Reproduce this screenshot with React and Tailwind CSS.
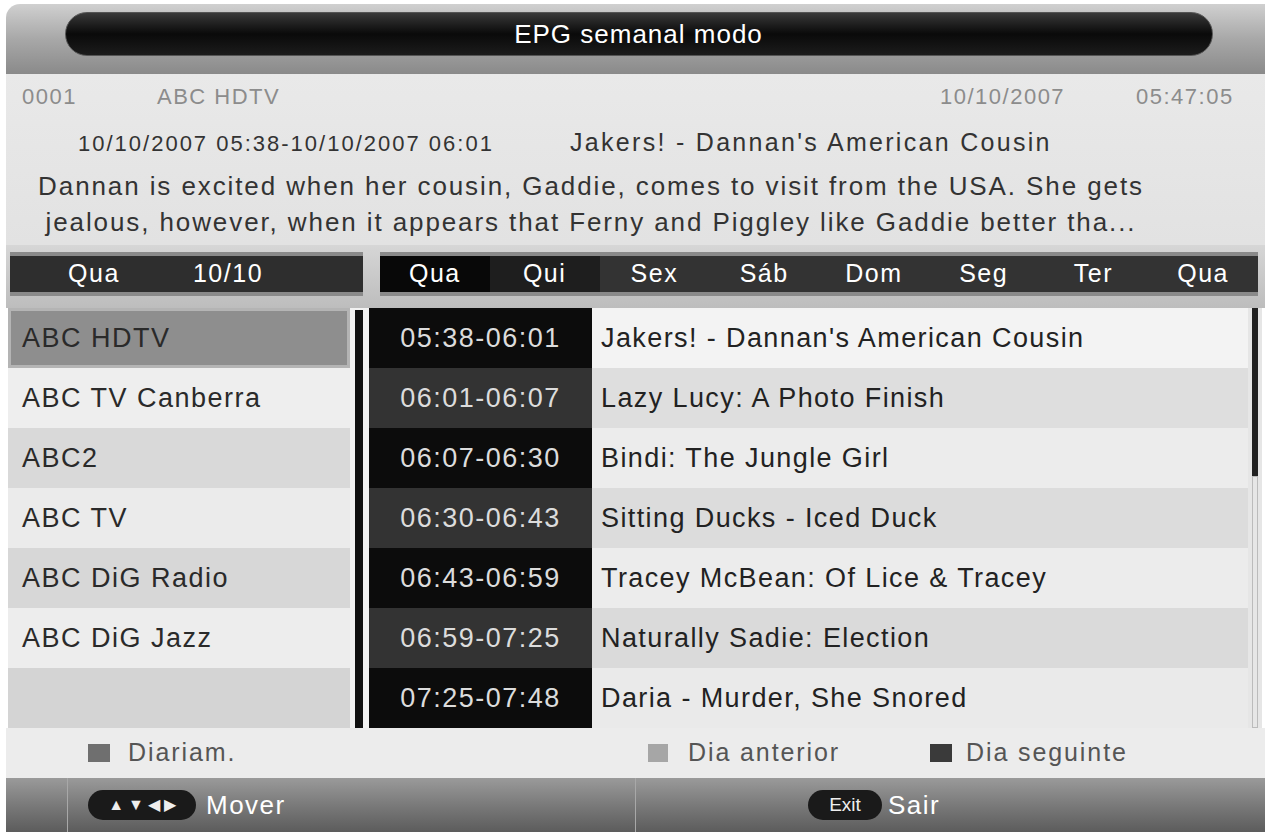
const channels = [
  { name: 'ABC HDTV', bg: 'bg-[#8e8e8e]', selected: true },
  { name: 'ABC TV Canberra', bg: 'bg-[#eeeeee]' },
  { name: 'ABC2', bg: 'bg-[#d9d9d9]' },
  { name: 'ABC TV', bg: 'bg-[#ebebeb]' },
  { name: 'ABC DiG Radio', bg: 'bg-[#d7d7d7]' },
  { name: 'ABC DiG Jazz', bg: 'bg-[#ededed]' },
  { name: '', bg: 'bg-[#d4d4d4]' },
]

const events = [
  { time: '05:38-06:01', title: "Jakers! - Dannan's American Cousin", dark: true, bg: 'bg-[#f3f3f3]' },
  { time: '06:01-06:07', title: 'Lazy Lucy: A Photo Finish', dark: false, bg: 'bg-[#dedede]' },
  { time: '06:07-06:30', title: 'Bindi: The Jungle Girl', dark: true, bg: 'bg-[#ececec]' },
  { time: '06:30-06:43', title: 'Sitting Ducks - Iced Duck', dark: false, bg: 'bg-[#dcdcdc]' },
  { time: '06:43-06:59', title: 'Tracey McBean: Of Lice & Tracey', dark: true, bg: 'bg-[#ececec]' },
  { time: '06:59-07:25', title: 'Naturally Sadie: Election', dark: false, bg: 'bg-[#dadada]' },
  { time: '07:25-07:48', title: 'Daria - Murder, She Snored', dark: true, bg: 'bg-[#eaeaea]' },
]

const days = ['Qua', 'Qui', 'Sex', 'Sáb', 'Dom', 'Seg', 'Ter', 'Qua']

export default function App() {
  return (
    <div
      className="w-[1271px] h-[832px] overflow-hidden bg-white flex flex-col"
      style={{ fontFamily: '"Liberation Sans", Arial, sans-serif' }}
    >
      {/* Title bar */}
      <div className="h-[70px] mx-[6px] mt-[4px] rounded-tl-[14px] bg-gradient-to-b from-[#d0d0d0] via-[#a8a8a8] to-[#8a8a8a] pt-[8px] flex justify-center">
        <div className="w-[1148px] h-[44px] ml-[6px] rounded-full bg-gradient-to-b from-[#3a3a3a] via-[#0a0a0a] to-[#1c1c1c] border border-[#555] flex items-center justify-center">
          <span className="text-white text-[26px] tracking-[1px] leading-none">EPG semanal modo</span>
        </div>
      </div>

      {/* Info panel */}
      <div className="h-[171px] mx-[6px] bg-gradient-to-b from-[#e9e9e9] to-[#e2e2e2] flex flex-col">
        <div className="h-[44px] flex items-center text-[22px] tracking-[1.5px] text-[#8c8c8c]">
          <span className="ml-[16px] w-[135px]">0001</span>
          <span className="w-[783px]">ABC HDTV</span>
          <span className="w-[196px]">10/10/2007</span>
          <span>05:47:05</span>
        </div>
        <div className="h-[50px] flex items-center text-[#333]">
          <span className="ml-[72px] w-[492px] text-[22px] tracking-[2px]">10/10/2007 05:38-10/10/2007 06:01</span>
          <span className="text-[25px] tracking-[2.3px]">Jakers! - Dannan's American Cousin</span>
        </div>
        <div className="text-[26px] tracking-[1.9px] text-[#333] leading-[36px] w-[1170px] text-center">
          <div className="truncate">Dannan is excited when her cousin, Gaddie, comes to visit from the USA. She gets</div>
          <div className="truncate">jealous, however, when it appears that Ferny and Piggley like Gaddie better tha...</div>
        </div>
      </div>

      {/* Day header */}
      <div className="h-[63px] mx-[6px] bg-gradient-to-b from-[#d6d6d6] to-[#bdbdbd] flex items-start pt-[7px]">
        <div className="ml-[4px] w-[353px] h-[44px] bg-[#2e2e2e] border-y-[4px] border-[#8a8a8a] flex items-center text-white text-[25px] tracking-[1.5px]">
          <span className="w-[168px] text-center">Qua</span>
          <span className="w-[100px] text-center">10/10</span>
        </div>
        <div className="ml-[17px] w-[878px] h-[44px] bg-[#333] border-y-[4px] border-[#8a8a8a] flex text-[25px] tracking-[1.5px] text-white">
          {days.map((d, i) => (
            <div
              key={i}
              className={`flex-1 flex items-center justify-center ${i === 0 ? 'bg-[#080808]' : ''} ${i === 1 ? 'bg-[#1e1e1e]' : ''}`}
            >
              {d}
            </div>
          ))}
        </div>
      </div>

      {/* Content */}
      <div className="h-[420px] ml-[8px] flex">
        {/* Channel list */}
        <div className="w-[342px] flex flex-col">
          {channels.map((c, i) => (
            <div
              key={i}
              className={`h-[60px] flex items-center text-[27px] tracking-[1.5px] text-[#2a2a2a] ${c.bg} ${
                c.selected ? 'border-[3px] border-[#b4b4b4] pl-[11px]' : 'pl-[14px]'
              }`}
            >
              {c.name}
            </div>
          ))}
        </div>

        {/* Separator */}
        <div className="w-[19px] bg-[#f2f2f2] flex pt-[2px]">
          <div className="w-[8px] bg-[#111] ml-[5px]" />
        </div>

        {/* Times */}
        <div className="w-[223px] flex flex-col">
          {events.map((e, i) => (
            <div
              key={i}
              className={`h-[60px] flex items-center justify-center text-[27px] tracking-[1.5px] text-[#dcdcdc] ${
                e.dark ? 'bg-[#0c0c0c]' : 'bg-[#333]'
              }`}
            >
              {e.time}
            </div>
          ))}
        </div>

        {/* Titles */}
        <div className="w-[656px] flex flex-col">
          {events.map((e, i) => (
            <div key={i} className={`h-[60px] flex items-center pl-[9px] text-[27px] tracking-[1.4px] text-[#222] ${e.bg}`}>
              {e.title}
            </div>
          ))}
        </div>

        {/* Scrollbar */}
        <div className="w-[14px] bg-[#e6e6e6] flex flex-col pl-[4px]">
          <div className="h-[168px] w-[6px] bg-[#222]" />
          <div className="flex-1 w-[6px] border border-[#bbb]" />
        </div>
      </div>

      {/* Legend */}
      <div className="h-[50px] mx-[6px] bg-[#ececec] flex items-center text-[25px] tracking-[1.9px] text-[#555]">
        <div className="ml-[82px] w-[560px] flex items-center">
          <span className="w-[22px] h-[18px] bg-[#6f6f6f]" />
          <span className="ml-[18px]">Diariam.</span>
        </div>
        <div className="w-[282px] flex items-center">
          <span className="w-[20px] h-[18px] bg-[#a6a6a6]" />
          <span className="ml-[20px]">Dia anterior</span>
        </div>
        <div className="flex items-center">
          <span className="w-[22px] h-[18px] bg-[#3a3a3a]" />
          <span className="ml-[14px]">Dia seguinte</span>
        </div>
      </div>

      {/* Footer */}
      <div className="flex-1 mx-[6px] bg-gradient-to-b from-[#9a9a9a] via-[#7a7a7a] to-[#5c5c5c] flex items-center text-white text-[26px] tracking-[1.5px]">
        <div className="w-[630px] h-full flex items-center border-r border-[#a8a8a8]">
          <div className="w-[62px] h-full border-r border-[#a8a8a8]" />
          <div className="ml-[20px] w-[108px] h-[30px] rounded-full bg-[#1a1a1a] flex items-center justify-center gap-[4px] text-[16px] tracking-normal text-[#eee]">
            <span>▲</span>
            <span>▼</span>
            <span>◀</span>
            <span>▶</span>
          </div>
          <span className="ml-[10px]">Mover</span>
        </div>
        <div className="ml-[172px] w-[74px] h-[30px] rounded-full bg-[#1a1a1a] flex items-center justify-center text-[19px] tracking-normal text-[#eee]">
          Exit
        </div>
        <span className="ml-[6px]">Sair</span>
      </div>
    </div>
  )
}
